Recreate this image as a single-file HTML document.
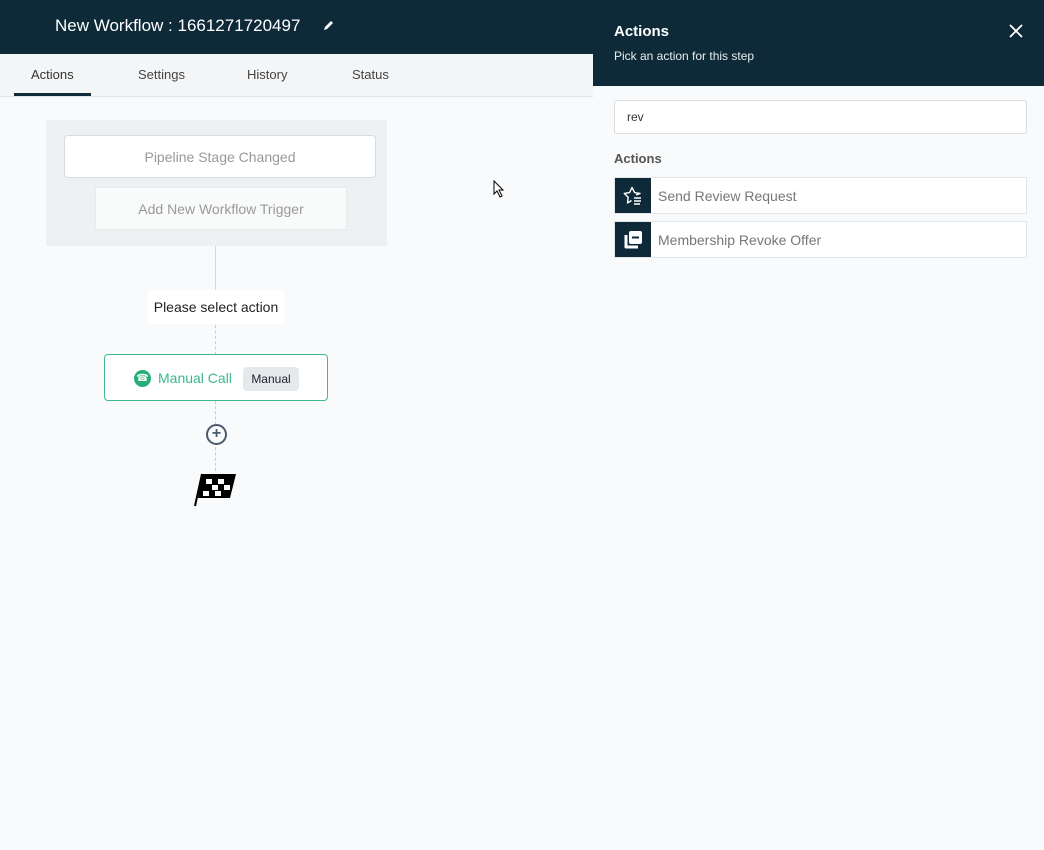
<!DOCTYPE html>
<html><head><style>
*{margin:0;padding:0;box-sizing:border-box}
body{width:1044px;height:850px;overflow:hidden;background:#f9fafb;font-family:"Liberation Sans",sans-serif;position:relative}
.a{position:absolute}
</style></head><body>
<div class="a" style="left:0;top:0;width:593px;height:54px;background:#0e2a38"></div>
<div class="a" style="left:55px;top:16px;color:#fff;font-size:17px">New Workflow : 1661271720497</div>
<svg class="a" style="left:322px;top:19px" width="13" height="13" viewBox="0 0 13 13"><path d="M2 11 L3 8 L9 2 L11 4 L5 10 Z" fill="#fff"/></svg>
<div class="a" style="left:0;top:54px;width:593px;height:43px;background:#f3f5f6;border-bottom:1px solid #e2e5e8"></div>
<div class="a" style="left:31px;top:67px;font-size:13px;color:#333">Actions</div>
<div class="a" style="left:138px;top:67px;font-size:13px;color:#444">Settings</div>
<div class="a" style="left:247px;top:67px;font-size:13px;color:#444">History</div>
<div class="a" style="left:352px;top:67px;font-size:13px;color:#444">Status</div>
<div class="a" style="left:14px;top:93px;width:77px;height:3px;background:#0e2a38"></div>

<div class="a" style="left:46px;top:120px;width:341px;height:126px;background:#eef1f3"></div>
<div class="a" style="left:64px;top:135px;width:312px;height:43px;background:#fff;border:1px solid #d8dcdf;border-radius:4px;text-align:center;line-height:42px;font-size:14px;color:#999">Pipeline Stage Changed</div>
<div class="a" style="left:95px;top:187px;width:252px;height:43px;background:#f9fafa;border:1px dotted #d8dcdf;text-align:center;line-height:42px;font-size:14px;color:#999">Add New Workflow Trigger</div>
<div class="a" style="left:215px;top:246px;width:1px;height:44px;background:#d6d9dc"></div>
<div class="a" style="left:148px;top:290px;width:136px;height:34px;background:#fff;text-align:center;line-height:34px;font-size:14px;color:#222">Please select action</div>
<div class="a" style="left:215px;top:325px;height:30px;border-left:1px dashed #ccc"></div>
<div class="a" style="left:104px;top:354px;width:224px;height:47px;background:#fff;border:1px solid #3cb88a;border-radius:4px"></div>
<div class="a" style="left:134px;top:370px;width:17px;height:17px;border-radius:50%;background:#27ae77;color:#fff;font-size:10px;text-align:center;line-height:17px">☎</div>
<div class="a" style="left:158px;top:370px;font-size:14px;color:#3cb88a">Manual Call</div>
<div class="a" style="left:243px;top:367px;width:56px;height:24px;background:#e6e9eb;border-radius:4px;font-size:12px;line-height:24px;text-align:center;color:#223">Manual</div>
<div class="a" style="left:215px;top:401px;height:70px;border-left:1px dashed #ccc"></div>
<div class="a" style="left:206px;top:424px;width:21px;height:21px;border:2px solid #4b5a6e;border-radius:50%;background:#f9fafb;text-align:center;line-height:16px;font-size:16px;color:#4b5a6e;font-weight:bold">+</div>
<svg class="a" style="left:194px;top:472px" width="44" height="36" viewBox="0 0 44 36"><path d="M8 2 L42 2 L36 26 L4 26 Z" fill="#000"/><g fill="#fff"><rect x="12" y="7" width="6" height="5"/><rect x="24" y="7" width="6" height="5"/><rect x="18" y="13" width="6" height="5" /><rect x="30" y="13" width="6" height="5"/><rect x="9" y="19" width="6" height="5"/><rect x="21" y="19" width="6" height="5"/></g><path d="M8 2 L1 34" stroke="#000" stroke-width="2"/></svg>

<div class="a" style="left:593px;top:0;width:451px;height:850px;background:#f9fafb"></div>
<div class="a" style="left:593px;top:0;width:451px;height:86px;background:#0e2a38"></div>
<div class="a" style="left:614px;top:23px;color:#fff;font-size:15px;font-weight:bold">Actions</div>
<div class="a" style="left:614px;top:49px;color:#e8ecef;font-size:12px">Pick an action for this step</div>
<svg class="a" style="left:1009px;top:24px" width="14" height="14"><path d="M1 1L13 13M13 1L1 13" stroke="#fff" stroke-width="1.8"/></svg>
<div class="a" style="left:614px;top:100px;width:413px;height:34px;background:#fff;border:1px solid #d8dcdf;border-radius:3px;padding-left:12px;line-height:32px;font-size:12px;color:#333">rev</div>
<div class="a" style="left:614px;top:151px;font-size:13px;font-weight:bold;color:#555">Actions</div>
<div class="a" style="left:614px;top:177px;width:413px;height:37px;background:#fff;border:1px solid #e3e6e8"></div>
<div class="a" style="left:615px;top:178px;width:36px;height:35px;background:#0e2a38"></div>
<svg class="a" style="left:622px;top:185px" width="22" height="22" viewBox="0 0 22 22"><path d="M14 10 L18 8.5 L12.6 7.6 L10 2.5 L7.6 7.6 L2.3 8.5 L6.2 12.2 L5.5 18 L9.5 15.5" fill="none" stroke="#fff" stroke-width="1.4" stroke-linejoin="round"/><path d="M12 13h7M12 16h7M12 19h6" stroke="#fff" stroke-width="1.4"/></svg>
<div class="a" style="left:658px;top:188px;font-size:14px;color:#777">Send Review Request</div>
<div class="a" style="left:614px;top:221px;width:413px;height:37px;background:#fff;border:1px solid #e3e6e8"></div>
<div class="a" style="left:615px;top:222px;width:36px;height:35px;background:#0e2a38"></div>
<svg class="a" style="left:622px;top:229px" width="22" height="22" viewBox="0 0 22 22"><rect x="7" y="2" width="13" height="13" rx="2" fill="#fff"/><rect x="10" y="7.5" width="7" height="2" fill="#0e2a38"/><path d="M4 6 V18 H16" fill="none" stroke="#fff" stroke-width="3" stroke-linejoin="round"/></svg>
<div class="a" style="left:658px;top:232px;font-size:14px;color:#777">Membership Revoke Offer</div>
<svg class="a" style="left:493px;top:180px" width="12" height="18"><path d="M1 1 L1 14 L4 11 L7 17 L9 16 L6 10 L10 10 Z" fill="#fff" stroke="#000"/></svg>
</body></html>
